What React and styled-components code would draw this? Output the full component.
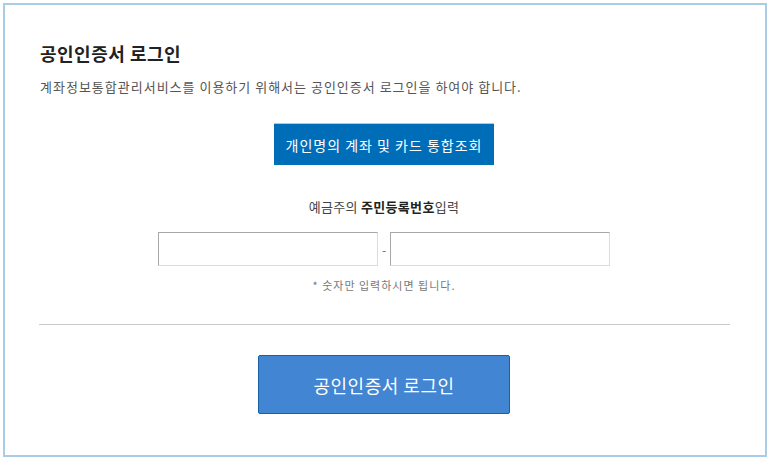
import React from "react";
import styled, { createGlobalStyle } from "styled-components";

const Global = createGlobalStyle`
  html, body { margin: 0; padding: 0; background: #fff; }
  body { font-family: "Noto Sans CJK KR", "Noto Sans", sans-serif; }
  * { box-sizing: border-box; }
`;

const Page = styled.div`
  padding: 3px 4px 4px 3px;
`;

const Box = styled.div`
  width: 764px;
  height: 454px;
  border: 2px solid #a9cde5;
  padding: 36px 35px 0 34px;
  display: flex;
  flex-direction: column;
`;

const Title = styled.h1`
  margin: 0 0 0 1px;
  font-size: 18px;
  line-height: 24px;
  font-weight: 700;
  letter-spacing: 0.5px;
  color: #222;
`;

const Desc = styled.p`
  margin: 12px 0 0 1px;
  font-size: 13px;
  line-height: 20px;
  letter-spacing: 1px;
  color: #555;
`;

const Center = styled.div`
  display: flex;
  flex-direction: column;
  align-items: center;
  padding-right: 1px;
  margin-top: ${(p) => p.$mt || 0}px;
`;

const QueryButton = styled.button`
  width: 220px;
  height: 42px;
  border: 0;
  border-top: 1px solid #c4c4c4;
  background: #006db8;
  color: #fff;
  font-family: inherit;
  font-size: 14px;
  letter-spacing: 1px;
  padding: 0;
  cursor: pointer;
`;

const Label = styled.div`
  font-size: 13px;
  line-height: 20px;
  letter-spacing: 0.3px;
  color: #444;
  b { font-weight: 700; color: #222; }
`;

const InputRow = styled.div`
  display: flex;
  align-items: center;
`;

const Field = styled.input`
  width: 220px;
  height: 34px;
  border: 1px solid #dcdcdc;
  border-top-color: #a8a8a8;
  border-left-color: #a8a8a8;
  padding: 0 8px;
  font-size: 13px;
  outline: none;
`;

const Dash = styled.span`
  width: 12px;
  text-align: center;
  font-size: 12px;
  color: #666;
`;

const Note = styled.div`
  font-size: 11px;
  line-height: 16px;
  letter-spacing: 1px;
  color: #777;
`;

const Divider = styled.hr`
  margin: 31px 0 0 0;
  border: 0;
  height: 1px;
  background: #c8c8c8;
`;

const LoginButton = styled.button`
  width: 252px;
  height: 59px;
  border: 1px solid #1d5fa6;
  border-radius: 2px;
  background: #4285d2;
  color: #fff;
  font-family: inherit;
  font-size: 18px;
  letter-spacing: 0.5px;
  padding: 0;
  cursor: pointer;
`;

export default function App() {
  return (
    <>
      <Global />
      <Page>
        <Box>
          <Title>공인인증서 로그인</Title>
          <Desc>계좌정보통합관리서비스를 이용하기 위해서는 공인인증서 로그인을 하여야 합니다.</Desc>
          <Center $mt={26}>
            <QueryButton>개인명의 계좌 및 카드 통합조회</QueryButton>
          </Center>
          <Center $mt={32}>
            <Label>
              예금주의 <b>주민등록번호</b>입력
            </Label>
          </Center>
          <Center $mt={15}>
            <InputRow>
              <Field type="text" />
              <Dash>-</Dash>
              <Field type="password" />
            </InputRow>
          </Center>
          <Center $mt={11}>
            <Note>* 숫자만 입력하시면 됩니다.</Note>
          </Center>
          <Divider />
          <Center $mt={30}>
            <LoginButton>공인인증서 로그인</LoginButton>
          </Center>
        </Box>
      </Page>
    </>
  );
}
